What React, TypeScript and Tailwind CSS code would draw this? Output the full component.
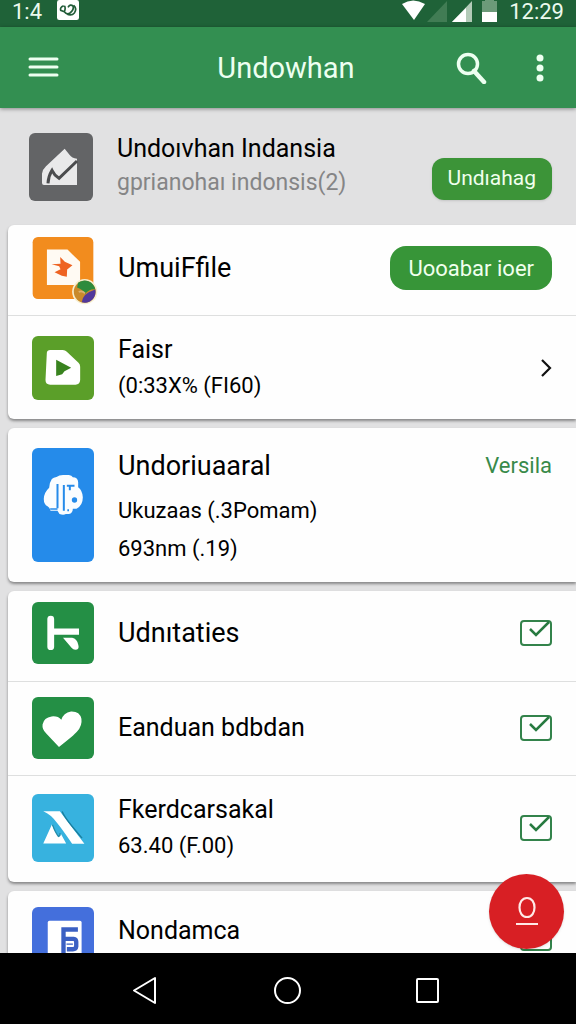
import React from 'react';

const MarketIcon = () => (
    <svg viewBox="0 0 192 204" className="block h-[68px] w-16 rounded-md bg-[#636466]" aria-hidden="true">
        <path d="M39 150 V122 Q41 109 51 100 L107 47 L122 66 Q128 75 144 77 V156 H45 Q39 156 39 150Z" fill="#e9e9ea" />
        <path d="M57 151 Q58 130 69 112 Q76 127 90 136 L144 84" fill="none" stroke="#4b4c4e" strokeWidth="9" />
    </svg>
);

const FileIcon = () => (
    <svg viewBox="0 0 183 187" className="block h-[62px] w-[62px] overflow-visible" aria-hidden="true">
        <rect width="183" height="187" rx="16" fill="#f28c1e" />
        <path d="M43 38 H105 L143 75 V145 H43Z" fill="#fffaf3" />
        <path d="M83 60 L97 75 L120 85 L104 98 L103 120 L88 117 L66 106 L84 97 L80 88 L57 82 L84 81Z" fill="#ee6322" />
        <circle cx="157" cy="165" r="38" fill="#f7efcf" />
        <circle cx="157" cy="165" r="33" fill="#c98a2b" />
        <path d="M137 138 A33 33 0 0 1 189 158 Q170 156 158 172 Q153 158 134 152Z" fill="#2e8b3d" />
        <path d="M189 158 A33 33 0 0 1 148 197 Q150 170 189 158Z" fill="#51389b" />
        <path d="M139 166 Q148 160 158 170" fill="none" stroke="#d9b070" strokeWidth="5" />
    </svg>
);

const PlayIcon = () => (
    <svg viewBox="0 0 185 192" className="block h-16 w-[62px] rounded-md bg-[#5b9f29]" aria-hidden="true">
        <path d="M44 50 Q45 42 54 42 H92 Q99 42 104 47 L139 80 Q144 85 144 92 V132 Q143 146 130 146 H54 Q40 146 40 132Z" fill="#fff" />
        <path d="M72 71 L117 95 L97 106 L90 115 L72 120Z" fill="#39831f" />
    </svg>
);

const CloudIcon = () => (
    <svg viewBox="0 0 189 342" className="block h-[114px] w-[62px] rounded-md bg-[#258bea]" preserveAspectRatio="xMidYMid slice" aria-hidden="true">
        <path d="M61 93 Q66 88 75 87 Q84 80 98 81 H112 Q121 82 124 88 Q139 88 140 103 V118 Q153 128 154 148 Q154 173 135 182 H124 Q124 195 112 198 H103 Q96 203 84 198 L78 188 H57 Q55 179 48 175 Q36 168 37 151 Q38 133 53 119 Q54 103 61 93Z" fill="#fafdff" />
        <path d="M78 108 V181 M97 188 V111 M106 113 H129 M115 113 V127" fill="none" stroke="#258bea" strokeWidth="6" />
        <circle cx="129" cy="156" r="8" fill="#258bea" />
        <path d="M56 183 H78 M110 184 V190" stroke="#258bea" strokeWidth="5" />
    </svg>
);

const BranchIcon = () => (
    <svg viewBox="0 0 182 182" className="block h-[62px] w-[62px] rounded-md bg-[#248f45]" aria-hidden="true">
        <path d="M55 50 V131" stroke="#fff" strokeWidth="20" strokeLinecap="round" />
        <path d="M55 87 H138" stroke="#fff" strokeWidth="18" />
        <path d="M91 105 H118 Q132 107 136 126 Q140 140 127 140 Q121 140 116 134 Z" fill="#fff" />
    </svg>
);

const HeartIcon = () => (
    <svg viewBox="0 0 182 185" className="block h-[62px] w-[62px] rounded-md bg-[#248f45]" aria-hidden="true">
        <path d="M79 149 L41 109 Q28 96 30 82 Q34 61 57 58 Q76 56 86 68 Q92 47 115 43 Q141 42 146 65 Q149 86 133 103 Q124 114 79 149Z" fill="#fff" />
    </svg>
);

const PeakIcon = () => (
    <svg viewBox="0 0 187 203" className="block h-[68px] w-[62px] rounded-md bg-[#37b2df]" aria-hidden="true">
        <path d="M34 51 H84 L158 149 H121 Q91 105 77 88 Q57 60 34 51Z" fill="#fff" />
        <path d="M60 91 Q67 109 77 123 Q83 132 87 119 L103 148 H34Z" fill="#fff" />
        <path d="M91 52 Q98 72 151 132" fill="none" stroke="#1a7e9d" strokeWidth="4" />
        <path d="M62 92 Q70 115 80 127 Q86 125 84 117" fill="none" stroke="#258ca9" strokeWidth="4" />
    </svg>
);

const PageIcon = () => (
    <svg viewBox="0 0 185 185" className="block h-[62px] w-[62px] rounded-md bg-[#446fdc]" aria-hidden="true">
        <rect x="47" y="41" width="101" height="120" rx="5" fill="#fff" />
        <path d="M137 67 H94 V145 M94 95 H124 Q132 96 132 104 V118 Q131 126 122 126 H104" fill="none" stroke="#3b60c3" strokeWidth="13" />
        <path d="M103 111 H122" stroke="#3b60c3" strokeWidth="4" />
    </svg>
);

const CheckBox = ({ label }: { label: string }) => (
    <label className="grid h-[26px] w-8 shrink-0 cursor-pointer">
        <input
            type="checkbox"
            defaultChecked
            aria-label={label}
            className="peer col-start-1 row-start-1 m-0 h-[26px] w-8 appearance-none rounded border-2 border-[#33834b]"
        />
        <svg viewBox="0 0 32 26" className="pointer-events-none invisible col-start-1 row-start-1 h-[26px] w-8 peer-checked:visible" aria-hidden="true">
            <path d="M10 9 L16 15 L29 2" fill="none" stroke="#277a40" strokeWidth="2.5" />
        </svg>
    </label>
);

type RowProps = {
    icon: React.ReactNode;
    title: string;
    lines?: string[];
    action: React.ReactNode;
    className: string;
    large?: boolean;
};

const Row = ({ icon, title, lines = [], action, className, large }: RowProps) => (
    <li className={`flex items-center pr-6 pl-6 ${className}`}>
        <div className="w-[62px] shrink-0">{icon}</div>
        <div className={`ml-6 min-w-0 flex-1 whitespace-nowrap text-black ${lines.length > 1 ? 'pt-1.5' : ''}`}>
            <h2 className={large ? 'text-[27px] leading-9' : 'text-[25px] leading-9'}>{title}</h2>
            <div className={lines.length > 1 ? 'pt-2' : ''}>
                {lines.map(line => (
                    <p key={line} className={lines.length > 1 ? 'text-[22px] leading-[38px]' : 'text-[22px] leading-9'}>{line}</p>
                ))}
            </div>
        </div>
        {action}
    </li>
);

const Card = ({ children }: { children: React.ReactNode }) => (
    <ul className="ml-2 shrink-0 divide-y divide-[#dedfdf] rounded-l-md bg-[#fefefe] shadow-[0_2px_3px_#00000066]">{children}</ul>
);

const StatusBar = () => (
    <div className="flex h-[27px] shrink-0 items-start justify-between bg-[#1f6238] pr-3 pl-3 text-[22px] leading-6 text-[#ecfaee]">
        <div className="flex gap-[15px]">
            <span>1:4</span>
            <svg viewBox="0 0 66 60" className="h-5 w-[22px]" aria-hidden="true">
                <rect width="66" height="60" rx="7" fill="#fff" />
                <path d="M20 17 Q8 22 11 31 L22 35 M22 17 Q27 23 22 35 Q29 45 39 39 Q52 29 48 18 Q40 11 33 22 M50 16 Q61 26 52 39 Q44 49 29 42" fill="none" stroke="#215c38" strokeWidth="5" />
            </svg>
        </div>
        <div className="flex">
            <svg viewBox="0 0 98 22" className="mr-2.5 h-[22px] w-[98px]" aria-hidden="true">
                <path d="M1 4 Q12 -3 24 4 L13 20Z" fill="#fff" />
                <path d="M26 22 L46 1 V22Z" fill="#417c54" />
                <path d="M51 22 L71 1 V22Z" fill="#b3cbb8" />
                <path d="M51 22 L65 8 V22Z" fill="#fff" />
                <path d="M81 1 H84 V0 H93 V1 H96 V12 H81Z" fill="#6c9a79" />
                <path d="M81 12 H96 V22 H81Z" fill="#fff" />
            </svg>
            <span>12:29</span>
        </div>
    </div>
);

const AppBar = () => (
    <header className="z-10 grid h-[81px] shrink-0 grid-cols-[1fr_auto_1fr] items-center bg-[#338f51] pr-8 pl-7 text-[#edfff0] shadow-[0_1px_4px_#00000066]">
        <button type="button" aria-label="Menu" className="w-8">
            <svg viewBox="0 0 32 24" className="h-6 w-8" aria-hidden="true">
                <path d="M2 3 H29 M2 11 H29 M2 19 H29" stroke="currentColor" strokeWidth="3" strokeLinecap="round" />
            </svg>
        </button>
        <h1 className="text-[29px] leading-9">Undowhan</h1>
        <div className="flex items-center justify-end gap-[49px]">
            <button type="button" aria-label="Search">
                <svg viewBox="0 0 32 32" className="block h-8 w-8" aria-hidden="true">
                    <circle cx="13" cy="12" r="9.5" fill="none" stroke="currentColor" strokeWidth="3.5" />
                    <path d="M19 19 L29 30" stroke="currentColor" strokeWidth="4.5" strokeLinecap="round" />
                </svg>
            </button>
            <button type="button" aria-label="More options">
                <svg viewBox="0 0 8 28" className="block h-7 w-2" aria-hidden="true">
                    <g fill="currentColor">
                        <circle cx="4" cy="4" r="3.5" />
                        <circle cx="4" cy="14" r="3.5" />
                        <circle cx="4" cy="24" r="3.5" />
                    </g>
                </svg>
            </button>
        </div>
    </header>
);

const NavBar = () => (
    <nav className="flex h-[71px] shrink-0 items-center justify-center gap-[108px] bg-black pt-1 text-white">
        <button type="button" aria-label="Back">
            <svg viewBox="0 0 32 32" className="block h-8 w-8" aria-hidden="true">
                <path d="M23 3 V28 L2 15.5Z" fill="none" stroke="currentColor" strokeWidth="2" strokeLinejoin="round" />
            </svg>
        </button>
        <button type="button" aria-label="Home">
            <svg viewBox="0 0 32 32" className="block h-8 w-8" aria-hidden="true">
                <circle cx="15.5" cy="15.5" r="12.5" fill="none" stroke="currentColor" strokeWidth="2" />
            </svg>
        </button>
        <button type="button" aria-label="Recent apps">
            <svg viewBox="0 0 32 32" className="block h-8 w-8" aria-hidden="true">
                <rect x="5" y="4" width="21" height="23" rx="1" fill="none" stroke="currentColor" strokeWidth="2" />
            </svg>
        </button>
    </nav>
);

export default function App() {
    return (
        <div className="flex h-screen flex-col overflow-hidden bg-[#e1e1e2] font-['Roboto','Liberation_Sans',sans-serif]">
            <StatusBar />
            <AppBar />
            <div className="relative min-h-0 flex-1">
                <main className="flex h-full flex-col gap-[9px] overflow-hidden">
                    <section className="-mb-[9px] flex h-[117px] shrink-0 items-center pr-6 pl-[29px]">
                        <MarketIcon />
                        <div className="ml-6 min-w-0 flex-1 pb-1 whitespace-nowrap">
                            <h2 className="text-[25px] leading-9 text-black">Undoıvhan Indansia</h2>
                            <p className="text-[23px] leading-8 text-[#858586]">gprianohaı indonsis(2)</p>
                        </div>
                        <button type="button" className="mt-6 h-[42px] shrink-0 rounded-xl bg-[#3c9438] px-4 text-[21px] text-[#f0ffed] shadow-sm">
                            Undıahag
                        </button>
                    </section>

                    <Card>
                        <Row
                            className="h-[91px] pb-1"
                            icon={<FileIcon />}
                            title="UmuiFfile"
                            large
                            action={
                                <button type="button" className="h-11 shrink-0 rounded-2xl bg-[#379538] px-[18px] text-[22px] text-[#f0ffed]">
                                    Uooabar ioer
                                </button>
                            }
                        />
                        <Row
                            className="h-[103px]"
                            icon={<PlayIcon />}
                            title="Faisr"
                            lines={['(0:33X% (FI60)']}
                            action={
                                <button type="button" aria-label="Open Faisr">
                                    <svg viewBox="0 0 12 20" className="block h-5 w-3" aria-hidden="true">
                                        <path d="M2 2 L10 10 L2 18" fill="none" stroke="#111" strokeWidth="2.2" />
                                    </svg>
                                </button>
                            }
                        />
                    </Card>

                    <Card>
                        <Row
                            className="h-[154px]"
                            icon={<CloudIcon />}
                            title="Undoriuaaral"
                            large
                            lines={['Ukuzaas (.3Pomam)', '693nm (.19)']}
                            action={<a href="#versila" className="self-start pt-5 text-[22px] leading-9 text-[#388a4a]">Versila</a>}
                        />
                    </Card>

                    <Card>
                        <Row className="h-[91px] pb-1.5" icon={<BranchIcon />} title="Udnıtaties" large action={<CheckBox label="Udnıtaties" />} />
                        <Row className="h-[94px] pb-0.5" icon={<HeartIcon />} title="Eanduan bdbdan" action={<CheckBox label="Eanduan bdbdan" />} />
                        <Row
                            className="h-[106px] pb-0.5"
                            icon={<PeakIcon />}
                            title="Fkerdcarsakal"
                            lines={['63.40 (F.00)']}
                            action={<CheckBox label="Fkerdcarsakal" />}
                        />
                    </Card>

                    <Card>
                        <li className="flex h-[94px] items-start px-6 pt-4">
                            <div className="w-[62px] shrink-0"><PageIcon /></div>
                            <h2 className="ml-6 flex-1 pt-1.5 text-[25px] leading-9 text-black">Nondamca</h2>
                            <div className="pt-[18px]"><CheckBox label="Nondamca" /></div>
                        </li>
                    </Card>
                </main>

                <button
                    type="button"
                    aria-label="Profile"
                    className="absolute right-3 bottom-1 flex h-[75px] w-[75px] items-center justify-center rounded-full bg-[#d81f24] text-[#ffe9e7] shadow-sm"
                >
                    <svg viewBox="0 0 24 32" className="h-8 w-6" aria-hidden="true">
                        <path d="M12 2 C2 2 2 21 12 21 C22 21 22 2 12 2Z M1 28 H23" fill="none" stroke="currentColor" strokeWidth="2.2" />
                    </svg>
                </button>
            </div>
            <NavBar />
        </div>
    );
}
